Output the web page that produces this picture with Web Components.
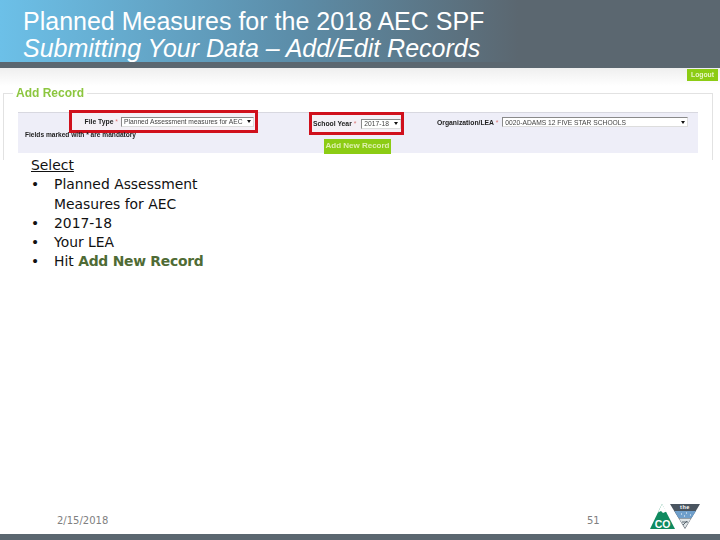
<!DOCTYPE html>
<html>
<head>
<meta charset="utf-8">
<title>Planned Measures</title>
<style>
  html, body { margin: 0; padding: 0; background: #fff; }
  step-list b { color: #4f6b35; letter-spacing: -0.25px; }
</style>
</head>
<body>
<slide-page>
  <slide-header slot="header">
    <span>Planned Measures for the 2018 AEC SPF</span>
    <em slot="sub">Submitting Your Data – Add/Edit Records</em>
  </slide-header>
  <add-record slot="form"></add-record>
  <step-list slot="steps">
    <span slot="head">Select</span>
    <li>Planned Assessment<br>Measures for AEC</li>
    <li>2017-18</li>
    <li>Your LEA</li>
    <li>Hit <b>Add New Record</b></li>
  </step-list>
  <slide-footer slot="footer" date="2/15/2018" page="51"></slide-footer>
</slide-page>

<script>
class SlidePage extends HTMLElement {
  constructor() {
    super();
    this.attachShadow({ mode: "open" });
    this.shadowRoot.innerHTML = `
    <style>
      :host { display: flex; flex-direction: column; width: 720px; height: 540px; overflow: hidden; background: #fff; }
      .grow { flex: 1; }
    </style>
    <slot name="header"></slot>
    <slot name="form"></slot>
    <slot name="steps"></slot>
    <div class="grow"></div>
    <slot name="footer"></slot>
    `;
  }
}

class SlideHeader extends HTMLElement {
  constructor() {
    super();
    this.attachShadow({ mode: "open" });
    this.shadowRoot.innerHTML = `
    <style>
      :host {
        display: block;
        height: 68px;
        box-sizing: border-box;
        padding: 8px 0 0 23px;
        color: #fff;
        font: 25px/27px "Liberation Sans", Arial, sans-serif;
        background:
          linear-gradient(#5b6770, #5b6770) left bottom / 100% 6px no-repeat,
          linear-gradient(90deg, #6cc0e8 0%, #5c8eaa 40%, #5b6770 72%, #5b6770 100%);
      }
      div { white-space: nowrap; }
    </style>
    <div><slot></slot></div>
    <div><slot name="sub"></slot></div>
    `;
  }
}

class SelectBox extends HTMLElement {
  constructor() {
    super();
    this.attachShadow({ mode: "open" });
    this.shadowRoot.innerHTML = `
    <style>
      :host {
        display: flex;
        align-items: center;
        justify-content: space-between;
        box-sizing: border-box;
        height: 10px;
        padding: 0 2px 0 2px;
        background: #fff;
        border: 1px solid #8a8a8a;
        border-right-color: #ddd;
        border-bottom-color: #ddd;
        font: 6.7px "Liberation Sans", Arial, sans-serif;
        color: #444;
        white-space: nowrap;
      }
      i { width: 0; height: 0; border: 2.5px solid transparent; border-top: 3px solid #111; border-bottom: 0; }
    </style>
    <slot></slot><i></i>
    `;
  }
}

class AddRecord extends HTMLElement {
  constructor() {
    super();
    this.attachShadow({ mode: "open" });
    this.shadowRoot.innerHTML = `
    <style>
      :host {
        display: block;
        height: 90px;
        box-sizing: border-box;
        padding: 1px 2px 0 0;
        background: linear-gradient(#efefef 0, #fff 18px);
        font-family: "Liberation Sans", Arial, sans-serif;
        filter: blur(0.35px);
      }
      .top { display: flex; justify-content: flex-end; height: 24px; }
      .logout {
        width: 31px; height: 12px;
        background: #8ccc14; color: #e8f5c8;
        font-size: 6.8px; font-weight: bold; line-height: 11px; text-align: center;
      }
      .frame {
        height: 67px;
        box-sizing: border-box;
        margin: 0 5px 0 3px;
        border: 1px solid #e2e2e2;
        border-bottom: 0;
        padding: 18px 14px 0 14px;
        position: relative;
      }
      .legend {
        position: absolute; left: 9px; top: -7px;
        padding: 0 3px;
        background: #fff;
        color: #8cc63f;
        font-size: 12px; font-weight: bold; line-height: 13px;
      }
      .panel {
        height: 41px;
        box-sizing: border-box;
        background: #eeeef8;
        border-top: 1px solid #d8d8e0;
      }
      .fields { display: flex; align-items: flex-start; height: 22px; padding-left: 51px; }
      .hl {
        display: flex; align-items: center;
        height: 23px; box-sizing: border-box;
        border: 3px solid #d0101c;
        background: #f4f0f6;
      }
      .file { width: 189px; margin-top: -3px; justify-content: flex-end; padding-right: 1px; }
      .file select-box { width: 133px; margin-left: 3px; }
      .year { width: 95px; margin-left: 51px; margin-top: -1px; padding-left: 1px; }
      .year select-box { width: 41px; margin-left: 5px; }
      .org { display: flex; align-items: center; height: 10px; margin: 4px 0 0 33px; }
      .org select-box { width: 186px; margin-left: 4px; }
      label { font-size: 6.8px; font-weight: bold; color: #222; white-space: nowrap; }
      label s { color: #d77; text-decoration: none; font-weight: normal; }
      .row2 { display: flex; margin-top: -4px; padding-left: 7px; }
      .note { font-size: 6.6px; font-weight: bold; color: #222; line-height: 8px; width: 299px; white-space: nowrap; }
      .add {
        width: 67px; height: 15px; margin-top: 8px;
        background: #8ccc14; color: #dff0b0;
        font-size: 8px; font-weight: bold; line-height: 14px; text-align: center; white-space: nowrap;
      }
    </style>
    <div class="top"><div class="logout">Logout</div></div>
    <div class="frame">
      <div class="legend">Add Record</div>
      <div class="panel">
        <div class="fields">
          <div class="hl file"><label>File Type <s>*</s></label><select-box>Planned Assessment measures for AEC</select-box></div>
          <div class="hl year"><label>School Year <s>*</s></label><select-box>2017-18</select-box></div>
          <div class="org"><label>Organization/LEA <s>*</s></label><select-box>0020-ADAMS 12 FIVE STAR SCHOOLS</select-box></div>
        </div>
        <div class="row2">
          <div class="note">Fields marked with * are mandatory</div>
          <div class="add">Add New Record</div>
        </div>
      </div>
    </div>
    `;
  }
}

class StepList extends HTMLElement {
  constructor() {
    super();
    this.attachShadow({ mode: "open" });
    this.shadowRoot.innerHTML = `
    <style>
      :host {
        display: block;
        margin-top: -2px;
        padding-left: 31px;
        position: relative;
        color: #111;
        font: 13.9px/19.3px "DejaVu Sans", Verdana, sans-serif;
      }
      .head { text-decoration: underline; }
      ::slotted(li) { display: list-item; list-style: none; position: relative; padding-left: 23px; }
      ::slotted(li)::before { content: "•"; position: absolute; left: 0; }
    </style>
    <div class="head"><slot name="head"></slot></div>
    <slot></slot>
    `;
  }
}

class CoLogo extends HTMLElement {
  constructor() {
    super();
    this.attachShadow({ mode: "open" });
    this.shadowRoot.innerHTML = `
    <style>
      :host { display: block; width: 50px; height: 27px; }
      svg { display: block; }
      text { font-family: "Liberation Sans", Arial, sans-serif; font-weight: bold; }
    </style>
    <svg width="50" height="27" viewBox="0 0 50 27">
      <path d="M20 1 L50 1 L35 26 Z" fill="#4a5560"/>
      <path d="M24.5 8 L46 8 L41.5 15 L28.5 15 Z" fill="#6f9fcb"/>
      <path d="M29 15.5 L41 15.5 L35 25 Z" fill="#dfe5e8"/>
      <path d="M32 19 L38 19 M33 22 L37 18" stroke="#5b6770" stroke-width="1" fill="none"/>
      <path d="M31 11 h1 M36 10 h1 M40 12 h1 M34 13 h1" stroke="#fff" stroke-width="1"/>
      <text x="35" y="6.4" font-size="5.5" fill="#fff" text-anchor="middle" letter-spacing="0.6">the</text>
      <path d="M0 26 L12 1 L25 26 Z" fill="#0f8a5f"/>
      <path d="M12 1 L8 9.5 L11 8 L13 10 L16.500 8.500 Z" fill="#fff"/>
      <text x="12.500" y="24.500" font-size="10.500" fill="#fff" text-anchor="middle">CO</text>
    </svg>
    `;
  }
}

class SlideFooter extends HTMLElement {
  constructor() {
    super();
    this.attachShadow({ mode: "open" });
  }

  connectedCallback() {
    this.render();
  }

  render() {
    const date = this.getAttribute("date") || "";
    const page = this.getAttribute("page") || "";
    this.shadowRoot.innerHTML = `
    <style>
      :host { display: block; font: 10px/14px "DejaVu Sans", Verdana, sans-serif; color: #808080; }
      .row { display: flex; align-items: flex-end; height: 30px; padding: 0 20px 4px 57px; box-sizing: border-box; }
      .date { width: 530px; padding-bottom: 2px; }
      .page { width: 63px; padding-bottom: 2px; }
      .bar { height: 6px; background: #5b6770; }
    </style>
    <div class="row">
      <span class="date">${date}</span>
      <span class="page">${page}</span>
      <co-logo></co-logo>
    </div>
    <div class="bar"></div>
    `;
  }
}

customElements.define("slide-page", SlidePage);
customElements.define("slide-header", SlideHeader);
customElements.define("select-box", SelectBox);
customElements.define("add-record", AddRecord);
customElements.define("step-list", StepList);
customElements.define("co-logo", CoLogo);
customElements.define("slide-footer", SlideFooter);
</script>
</body>
</html>
